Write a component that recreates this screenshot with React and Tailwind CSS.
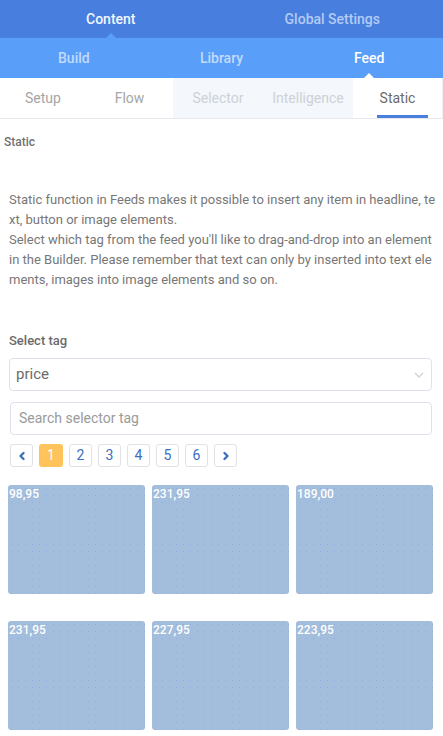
import React from 'react';

const prices = ['98,95', '231,95', '189,00', '231,95', '227,95', '223,95'];

const Caret = ({ color }) => (
    <span className={`absolute left-1/2 bottom-0 -translate-x-1/2 w-0 h-0 border-l-[5px] border-r-[5px] border-b-[5px] border-l-transparent border-r-transparent ${color}`}></span>
);

const Chevron = ({ dir }) => (
    <svg width="10" height="10" viewBox="0 0 10 10" fill="none" stroke="#3b6fbf" strokeWidth="2.4" strokeLinecap="round" strokeLinejoin="round">
        {dir === 'left' ? <path d="M6.5 2L3.5 5l3 3" /> : <path d="M3.5 2l3 3-3 3" />}
    </svg>
);

export default function App() {
    return (
        <div className="w-[443px] h-[736px] overflow-hidden bg-white font-['Roboto',sans-serif]">
            <div className="h-[38px] bg-[#487ede] grid grid-cols-2 text-[14px] font-medium">
                <div className="relative flex items-center justify-center text-[#f2f6ff]">
                    Content
                    <Caret color="border-b-[#599ef9]" />
                </div>
                <div className="flex items-center justify-center text-[#b3cbf3]">Global Settings</div>
            </div>
            <div className="h-[40px] bg-[#599ef9] grid grid-cols-3 text-[14px] font-medium">
                <div className="flex items-center justify-center text-[#c2dafc]">Build</div>
                <div className="flex items-center justify-center text-[#c2dafc]">Library</div>
                <div className="relative flex items-center justify-center text-white">
                    Feed
                    <Caret color="border-b-white" />
                </div>
            </div>
            <div className="h-[41px] grid grid-cols-[86px_87px_90px_90px_1fr] border-b border-[#e6e8ec] text-[14px]">
                <div className="flex items-center justify-center text-[#a6a6a6]">Setup</div>
                <div className="flex items-center justify-center text-[#a6a6a6]">Flow</div>
                <div className="flex items-center justify-center bg-[#f4f7fb] text-[#cdd1d8]">Selector</div>
                <div className="flex items-center justify-center bg-[#f4f7fb] text-[#cdd1d8]">Intelligence</div>
                <div className="relative flex items-center justify-center text-[#6b6b6b] border-r border-[#eef0f3]">
                    Static
                    <span className="absolute bottom-0 left-[24px] w-[51px] h-[3px] bg-[#4a7fdc]"></span>
                </div>
            </div>

            <div className="pl-[4px] pt-[15px] text-[12px] font-medium text-[#707070] leading-[16px]">Static</div>

            <p className="mt-[40px] pl-[9px] pr-[4px] text-[13px] leading-[20px] text-[#777] break-all">
                Static function in Feeds makes it possible to insert any item in headline, text, button or image elements.
                <br />
                Select which tag from the feed you'll like to drag-and-drop into an element
                <br />
                in the Builder. Please remember that text can only by inserted into text elements, images into image elements and so on.
            </p>

            <div className="mt-[42px] pl-[9px] text-[13px] font-medium text-[#6b6b6b] leading-[18px]">Select tag</div>

            <div className="mt-[8px] ml-[9px] mr-[11px] h-[33px] border border-[#dde2ec] rounded-[4px] flex items-center justify-between pl-[6px] pr-[6px]">
                <span className="text-[15px] text-[#6b6b6b]">price</span>
                <svg width="12" height="8" viewBox="0 0 12 8" fill="none" stroke="#cfd4dc" strokeWidth="1.4"><path d="M2 2l4 4 4-4" /></svg>
            </div>

            <div className="mt-[11px] ml-[10px] mr-[11px] h-[33px] border border-[#dde2ec] rounded-[4px] flex items-center pl-[8px]">
                <span className="text-[14px] text-[#9a9a9a]">Search selector tag</span>
            </div>

            <div className="mt-[9px] ml-[10px] flex gap-[6px]">
                <div className="w-[23px] h-[23px] border border-[#dfe2e7] rounded-[3px] flex items-center justify-center"><Chevron dir="left" /></div>
                <div className="w-[24px] h-[23px] bg-[#ffc35c] rounded-[3px] flex items-center justify-center text-[14px] text-white">1</div>
                {['2', '3', '4', '5', '6'].map((n) => (
                    <div key={n} className="w-[23px] h-[23px] border border-[#dfe2e7] rounded-[3px] flex items-center justify-center text-[14px] text-[#3b6fbf]">{n}</div>
                ))}
                <div className="w-[23px] h-[23px] border border-[#dfe2e7] rounded-[3px] flex items-center justify-center"><Chevron dir="right" /></div>
            </div>

            <div className="mt-[18px] ml-[8px] grid grid-cols-[137px_137px_137px] gap-x-[7px] gap-y-[27px]">
                {prices.map((p, i) => (
                    <div key={i} className="h-[109px] rounded-[3px] bg-[#a3bddc] bg-[radial-gradient(#8eaee0_0.6px,transparent_0.7px)] bg-[size:7px_7px] text-white text-[12px] font-medium leading-[16px] px-[1px] pt-[1px]">
                        {p}
                    </div>
                ))}
            </div>
        </div>
    );
}
